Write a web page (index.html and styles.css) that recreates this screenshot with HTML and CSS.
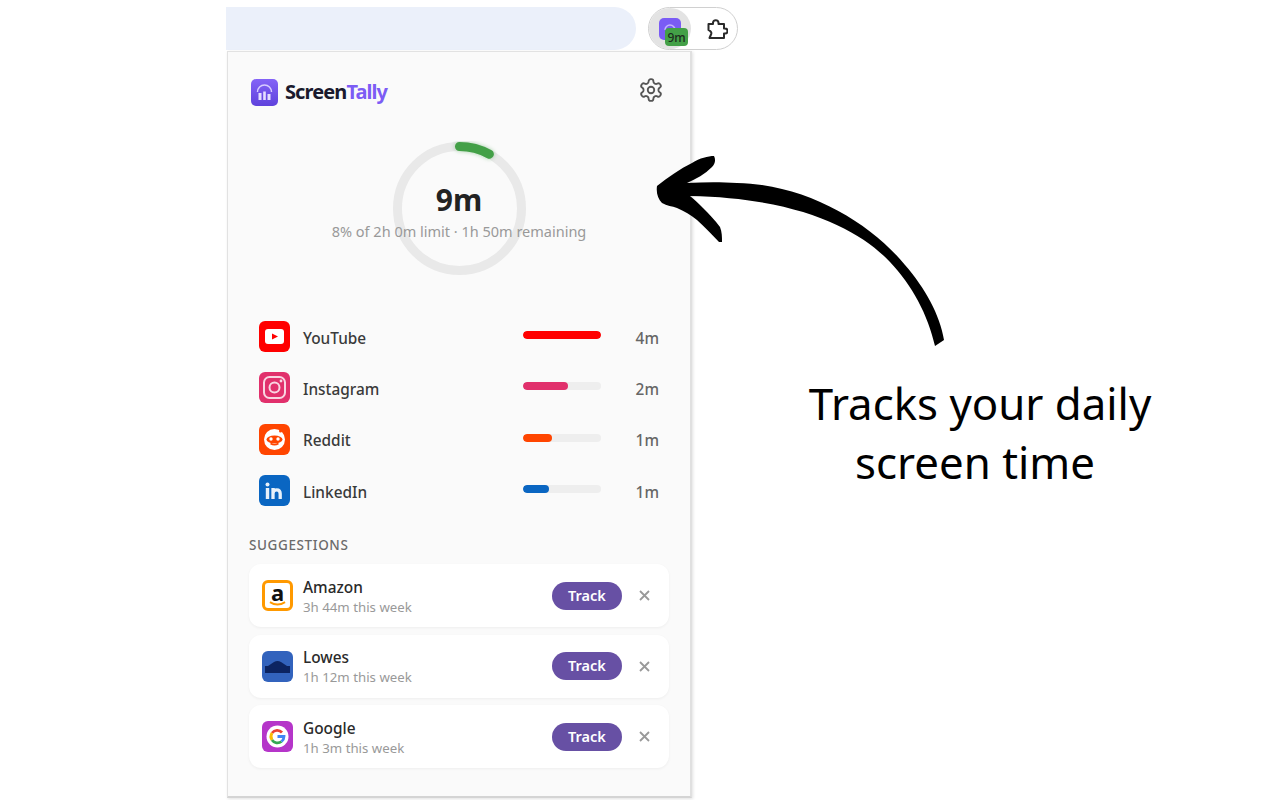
FILE: index.html
```html
<!DOCTYPE html>
<html lang="en">
<head>
    <meta charset="UTF-8">
    <meta name="viewport" content="width=device-width, initial-scale=1.0">
    <title>ScreenTally</title>
    <link rel="stylesheet" href="styles.css">
</head>
<body>

    <div class="toolbar">
        <div class="address-bar"></div>
        <div class="ext-pill">
            <div class="ext-active">
                <svg class="ext-logo" viewBox="0 0 22 22"><rect width="22" height="22" rx="5" fill="#7a5cf5"/><path d="M6 12a5 5 0 0 1 10 0" fill="none" stroke="#c3b5ff" stroke-width="1.5"/></svg>
                <span class="ext-badge">9m</span>
            </div>
            <svg class="puzzle" viewBox="0 0 24 24" fill="none" stroke="#2a2a2a" stroke-width="2" stroke-linejoin="round"><path d="M9 5.500a2.800 2.800 0 0 1 5.500 0V7H20v4.500h1a2.500 2.500 0 0 1 0 5h-1V21H5.500l1.500-3.500a2.500 2.500 0 0 0-1-3.500L4.500 13V7H9z"/></svg>
        </div>
    </div>

    <div class="stage">
        <div class="popup">
            <div class="popup-header">
                <div class="brand">
                    <svg class="brand-logo" viewBox="0 0 27 27">
                        <defs><linearGradient id="brandGrad" x1="0" y1="0" x2="0" y2="1"><stop offset="0" stop-color="#8463f7"/><stop offset="1" stop-color="#5f42dc"/></linearGradient></defs>
                        <rect width="27" height="27" rx="5" fill="url(#brandGrad)"/>
                        <path d="M6.500 13a7 7 0 0 1 14 0" fill="none" stroke="#d8ccff" stroke-width="1.500"/>
                        <rect x="7.500" y="14" width="3" height="7" fill="#e6dfff"/>
                        <rect x="12.200" y="12.500" width="2.600" height="8.500" fill="#e6dfff"/>
                        <rect x="16.500" y="15" width="3" height="6" fill="#e6dfff"/>
                    </svg>
                    <span class="brand-name">Screen<span class="brand-accent">Tally</span></span>
                </div>
                <svg class="gear" viewBox="0 0 24 24" fill="none" stroke="#555" stroke-width="1.700" stroke-linecap="round" stroke-linejoin="round"><path d="M12.220 2h-.440a2 2 0 0 0-2 2v.180a2 2 0 0 1-1 1.730l-.430.250a2 2 0 0 1-2 0l-.150-.080a2 2 0 0 0-2.730.730l-.220.380a2 2 0 0 0 .730 2.730l.150.100a2 2 0 0 1 1 1.720v.510a2 2 0 0 1-1 1.740l-.150.090a2 2 0 0 0-.730 2.730l.220.380a2 2 0 0 0 2.730.730l.150-.080a2 2 0 0 1 2 0l.430.250a2 2 0 0 1 1 1.730V20a2 2 0 0 0 2 2h.440a2 2 0 0 0 2-2v-.180a2 2 0 0 1 1-1.730l.430-.250a2 2 0 0 1 2 0l.150.080a2 2 0 0 0 2.730-.730l.220-.390a2 2 0 0 0-.730-2.730l-.150-.080a2 2 0 0 1-1-1.740v-.500a2 2 0 0 1 1-1.740l.150-.090a2 2 0 0 0 .730-2.730l-.220-.380a2 2 0 0 0-2.730-.730l-.150.080a2 2 0 0 1-2 0l-.430-.250a2 2 0 0 1-1-1.730V4a2 2 0 0 0-2-2z"/><circle cx="12" cy="12" r="3"/></svg>
            </div>

            <div class="ring-wrap">
                <svg class="ring" viewBox="0 0 135 135">
                    <circle cx="67.500" cy="67.500" r="62" fill="none" stroke="#e9e9e9" stroke-width="9"/>
                    <path class="ring-glow" d="M67.500 5.500A62 62 0 0 1 97.400 13.200" fill="none" stroke="#43a047" stroke-width="9" stroke-linecap="round"/>
                </svg>
                <div class="ring-value">9m</div>
                <div class="ring-note">8% of 2h 0m limit · 1h 50m remaining</div>
            </div>

            <div class="app-list">
                <div class="app-row">
                    <svg class="app-icon" viewBox="0 0 31 31"><rect width="31" height="31" rx="6" fill="#ff0000"/><rect x="6" y="8" width="19" height="15" rx="3" fill="#fff"/><path d="M13 12.500l6 3-6 3z" fill="#ff0000"/></svg>
                    <span class="app-name">YouTube</span>
                    <div class="bar"><div class="bar-fill" style="width: 100%; background: #ff0000"></div></div>
                    <span class="app-time">4m</span>
                </div>
                <div class="app-row">
                    <svg class="app-icon" viewBox="0 0 31 31"><rect width="31" height="31" rx="6" fill="#e1306c"/><rect x="5" y="5" width="21" height="21" rx="5.500" fill="none" stroke="#f9d5e2" stroke-width="2"/><circle cx="15.500" cy="15.500" r="5" fill="none" stroke="#f9d5e2" stroke-width="2"/><circle cx="22" cy="9" r="1.400" fill="#f9d5e2"/></svg>
                    <span class="app-name">Instagram</span>
                    <div class="bar"><div class="bar-fill" style="width: 58%; background: #e1306c"></div></div>
                    <span class="app-time">2m</span>
                </div>
                <div class="app-row">
                    <svg class="app-icon" viewBox="0 0 31 31"><rect width="31" height="31" rx="6" fill="#ff4500"/><circle cx="15.500" cy="15.500" r="10.500" fill="#fff"/><ellipse cx="15.500" cy="15.500" rx="8" ry="4" fill="#ff4500"/><circle cx="12" cy="15" r="1.700" fill="#fff"/><circle cx="19" cy="15" r="1.700" fill="#fff"/><path d="M11.500 19.500q4 2.500 8 0" fill="none" stroke="#ff4500" stroke-width="1.500"/><circle cx="21.500" cy="7" r="1.500" fill="#ff4500"/></svg>
                    <span class="app-name">Reddit</span>
                    <div class="bar"><div class="bar-fill" style="width: 37%; background: #ff4500"></div></div>
                    <span class="app-time">1m</span>
                </div>
                <div class="app-row">
                    <svg class="app-icon" viewBox="0 0 31 31"><rect width="31" height="31" rx="6" fill="#0a66c2"/><circle cx="8.500" cy="9.500" r="2" fill="#e8f1fa"/><rect x="6.800" y="13" width="3.400" height="11" fill="#e8f1fa"/><path d="M14 24V13M14 18.500c0-2.500 1.800-3.700 3.700-3.700s3.500 1.200 3.500 4V24" fill="none" stroke="#e8f1fa" stroke-width="3.300"/></svg>
                    <span class="app-name">LinkedIn</span>
                    <div class="bar"><div class="bar-fill" style="width: 33%; background: #0a66c2"></div></div>
                    <span class="app-time">1m</span>
                </div>
            </div>

            <div class="section-label">SUGGESTIONS</div>

            <div class="suggestions">
                <div class="card">
                    <div class="card-icon amazon">
                        <span class="amazon-a">a</span>
                        <svg class="amazon-smile" viewBox="0 0 18 6"><path d="M1 1q8 5 16 0" fill="none" stroke="#ff9900" stroke-width="2"/></svg>
                    </div>
                    <div class="card-text">
                        <div class="card-name">Amazon</div>
                        <div class="card-sub">3h 44m this week</div>
                    </div>
                    <button class="track-btn">Track</button>
                    <svg class="dismiss" viewBox="0 0 11 11"><path d="M1 1l9 9M10 1l-9 9" stroke="#999" stroke-width="1.800"/></svg>
                </div>
                <div class="card">
                    <svg class="card-icon" viewBox="0 0 31 31"><rect width="31" height="31" rx="6" fill="#3263bd"/><path d="M3 15h3l6-4q3.500-2 7 0l6 4h3v7H3z" fill="#0c2461"/></svg>
                    <div class="card-text">
                        <div class="card-name">Lowes</div>
                        <div class="card-sub">1h 12m this week</div>
                    </div>
                    <button class="track-btn">Track</button>
                    <svg class="dismiss" viewBox="0 0 11 11"><path d="M1 1l9 9M10 1l-9 9" stroke="#999" stroke-width="1.800"/></svg>
                </div>
                <div class="card">
                    <svg class="card-icon" viewBox="0 0 31 31"><rect width="31" height="31" rx="6" fill="#b535c9"/><circle cx="15.500" cy="15.500" r="11" fill="#fff"/><g fill="none" stroke-width="2.800"><path d="M20 11.500A6.500 6.500 0 0 0 10 12" stroke="#ea4335"/><path d="M10 12a6.500 6.500 0 0 0 0 7" stroke="#fbbc05"/><path d="M10 19a6.500 6.500 0 0 0 9.500 1.500" stroke="#34a853"/><path d="M19.500 20.500a6.500 6.500 0 0 0 2.500-5H15.500" stroke="#4285f4"/></g></svg>
                    <div class="card-text">
                        <div class="card-name">Google</div>
                        <div class="card-sub">1h 3m this week</div>
                    </div>
                    <button class="track-btn">Track</button>
                    <svg class="dismiss" viewBox="0 0 11 11"><path d="M1 1l9 9M10 1l-9 9" stroke="#999" stroke-width="1.800"/></svg>
                </div>
            </div>
        </div>

        <div class="annotation">
            <svg class="arrow" viewBox="650 150 300 200"><path d="M657 186C668 177 680 169 692 163C700 158 708 156 714 156C716 160 715 164 712 167C705 174 696 179 687 183C705 182 722 182 737 183C805 184 870 222 905 265C925 288 940 315 944 340L935 346C928 315 912 285 890 262C860 230 800 198 690 196C695 200 699 204 703 208C709 214 715 220 720 227C722 232 722 237 722 242L719 242C712 235 705 227 697 220C691 215 684 211 677 208C672 206 667 206 662 203C658 199 656 193 657 186Z" fill="#000"/></svg>
            <p class="annotation-text">Tracks your daily<br><span class="annotation-second">screen time</span></p>
        </div>
    </div>

</body>
</html>
```

FILE: styles.css
```css
html, body {
    height: 100%;
}

body {
    margin: 0;
    background-color: #fff;
    font-family: 'Noto Sans', sans-serif;
    color: #333;
    overflow: hidden;
}

.toolbar {
    display: flex;
    gap: 12px;
    height: 43px;
    margin: 7px 0 0 226px;
}

.address-bar {
    width: 410px;
    background-color: #ebf0fa;
    border-radius: 0 22px 22px 0;
}

.ext-pill {
    display: flex;
    align-items: center;
    width: 90px;
    box-sizing: border-box;
    border: 1px solid #d0d0d0;
    border-radius: 22px;
}

.ext-active {
    position: relative;
    width: 42px;
    height: 41px;
    background-color: #e3e3e3;
    border-radius: 50%;
}

.ext-logo {
    position: absolute;
    left: 10px;
    top: 10px;
    width: 22px;
    height: 22px;
}

.ext-badge {
    position: absolute;
    left: 16px;
    top: 20px;
    width: 23px;
    height: 18px;
    background-color: #43a047;
    border-radius: 4px;
    color: #1c2b1d;
    font-size: 12px;
    font-weight: 500;
    line-height: 19px;
    text-align: center;
}

.puzzle {
    width: 24px;
    height: 24px;
    margin-left: 13px;
}

.stage {
    display: flex;
    margin: 1px 0 0 227px;
}

.popup {
    width: 465px;
    height: 747px;
    box-sizing: border-box;
    padding: 0 21px;
    flex-shrink: 0;
    background-color: #fafafa;
    border: 1px solid #e2e2e2;
    border-bottom: 2px solid #d4d4d4;
    border-right: 2px solid #e0e0e0;
    box-shadow: 1px 1px 3px rgba(0, 0, 0, 0.12);
}

.popup-header {
    display: flex;
    justify-content: space-between;
    align-items: center;
    height: 27px;
    padding: 27px 5px 0 2px;
}

.brand {
    display: flex;
    align-items: center;
    gap: 7px;
}

.brand-logo {
    width: 27px;
    height: 27px;
}

.brand-name {
    margin-top: -2px;
    font-size: 20px;
    font-weight: 700;
    letter-spacing: -0.9px;
    color: #1a1a2e;
}

.brand-accent {
    color: #7c5cf5;
}

.gear {
    width: 26px;
    height: 26px;
    margin-bottom: 5px;
}

.ring-wrap {
    position: relative;
    display: flex;
    flex-direction: column;
    align-items: center;
    height: 135px;
    margin-top: 35px;
}

.ring {
    position: absolute;
    top: 0;
    left: 50%;
    width: 135px;
    height: 135px;
    margin-left: -67.5px;
}

.ring-glow {
    filter: drop-shadow(0 0 2px rgba(67, 160, 71, 0.45));
}

.ring-value {
    position: relative;
    margin-top: 38px;
    font-size: 30px;
    font-weight: 700;
    line-height: 42px;
    color: #222;
}

.ring-note {
    position: relative;
    font-size: 14.5px;
    line-height: 20px;
    color: #999;
    white-space: nowrap;
}

.app-list {
    display: flex;
    flex-direction: column;
    gap: 20.4px;
    margin-top: 45px;
    padding: 0 10px;
}

.app-row {
    display: flex;
    align-items: center;
    height: 31px;
}

.app-icon {
    width: 31px;
    height: 31px;
    margin-right: 13px;
}

.app-name {
    flex: 1;
    padding-top: 3px;
    font-size: 15.4px;
    font-weight: 500;
    color: #3a3a3a;
}

.bar {
    width: 78px;
    height: 8px;
    margin-top: -3px;
    background-color: #eee;
    border-radius: 4px;
    overflow: hidden;
}

.bar-fill {
    height: 100%;
    border-radius: 4px;
}

.app-time {
    width: 58px;
    padding-top: 3px;
    font-size: 15.4px;
    font-weight: 500;
    color: #666;
    text-align: right;
}

.section-label {
    margin-top: 30px;
    font-size: 13.5px;
    font-weight: 500;
    line-height: 18px;
    letter-spacing: 0.6px;
    color: #6b6b6b;
}

.suggestions {
    display: flex;
    flex-direction: column;
    gap: 7.67px;
    margin-top: 10px;
}

.card {
    display: flex;
    align-items: center;
    height: 63px;
    box-sizing: border-box;
    padding: 0 19px 0 13px;
    background-color: #fff;
    border-radius: 12px;
    box-shadow: 0 1px 3px rgba(0, 0, 0, 0.05);
}

.card-icon {
    width: 31px;
    height: 31px;
    margin-right: 10px;
    flex-shrink: 0;
}

.amazon {
    position: relative;
    box-sizing: border-box;
    border: 3px solid #ff9900;
    border-radius: 6px;
    background-color: #fff;
    text-align: center;
}

.amazon-a {
    display: block;
    font-size: 22px;
    font-weight: 700;
    line-height: 19px;
    color: #111;
}

.amazon-smile {
    position: absolute;
    left: 4px;
    bottom: 1px;
    width: 17px;
    height: 6px;
}

.card-text {
    flex: 1;
    padding-top: 2px;
}

.card-name {
    font-size: 15.4px;
    font-weight: 500;
    line-height: 20px;
    color: #2a2a2a;
}

.card-sub {
    margin-top: 0;
    font-size: 13.25px;
    line-height: 18px;
    color: #999;
}

.track-btn {
    width: 70px;
    height: 28px;
    padding: 0 0 2px;
    background-color: #6750a4;
    border: none;
    border-radius: 14px;
    font-family: inherit;
    font-size: 14.5px;
    font-weight: 600;
    color: #fff;
}

.dismiss {
    width: 11px;
    height: 11px;
    margin-left: 17px;
}

.annotation {
    flex: 1;
    position: relative;
    padding: 323px 12px 0 0;
}

.arrow {
    position: absolute;
    left: -42px;
    top: 99px;
    width: 300px;
    height: 200px;
    overflow: visible;
}

.annotation-text {
    margin: 0;
    font-size: 43.8px;
    line-height: 59px;
    color: #000;
    text-align: center;
}

.annotation-second {
    padding-right: 10px;
}
```
